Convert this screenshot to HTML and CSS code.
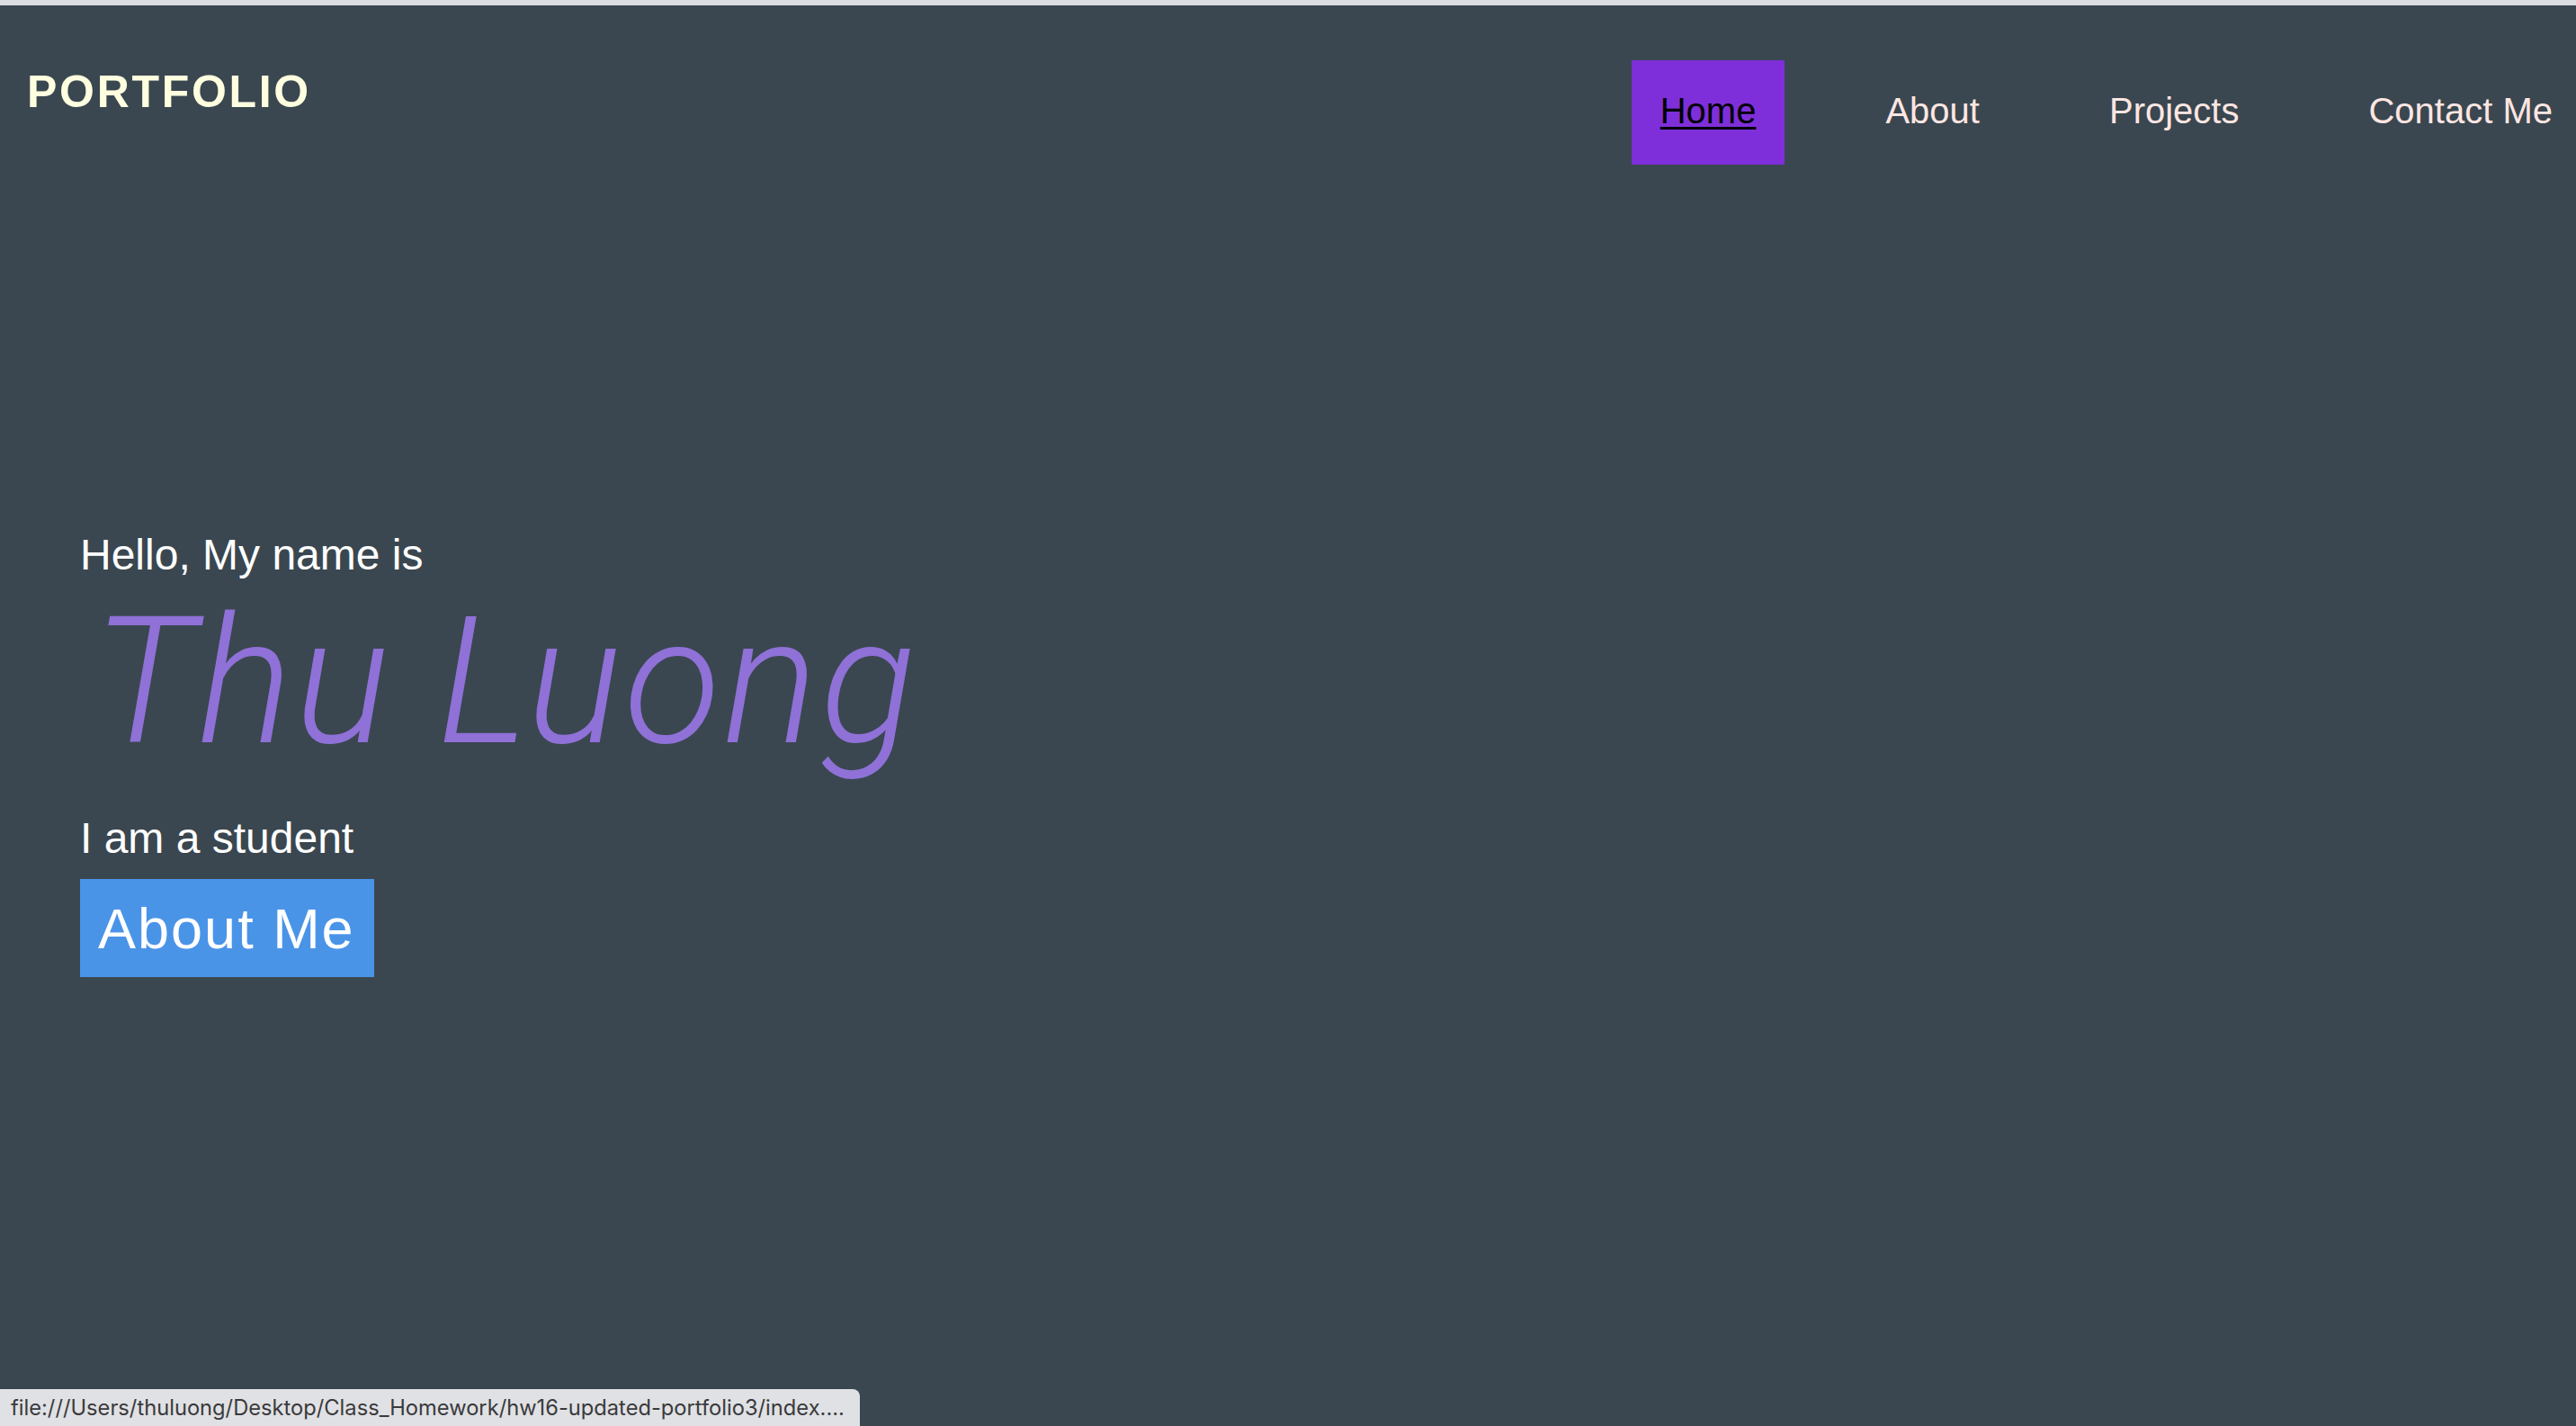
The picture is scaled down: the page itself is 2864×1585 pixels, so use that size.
FILE: index.html
```html
<!DOCTYPE html>
<html lang="en">
<head>
<meta charset="utf-8">
<title>Portfolio</title>
<link rel="stylesheet" href="styles.css">
</head>
<body>
<div class="chrome-edge"></div>
<header class="site-header">
  <div class="logo">PORTFOLIO</div>
  <nav>
    <ul class="nav-list">
      <li><a class="nav-link active" href="#">Home</a></li>
      <li><a class="nav-link" href="#">About</a></li>
      <li><a class="nav-link" href="#">Projects</a></li>
      <li><a class="nav-link" href="#">Contact Me</a></li>
    </ul>
  </nav>
</header>
<main class="hero">
  <p class="hello">Hello, My name is</p>
  <h1 class="name">Thu Luong</h1>
  <p class="tagline">I am a student</p>
  <a class="about-btn" href="#">About Me</a>
</main>
<div class="status-bar">file:///Users/thuluong/Desktop/Class_Homework/hw16-updated-portfolio3/index....</div>
</body>
</html>
```

FILE: styles.css
```css
html, body {
  margin: 0;
  padding: 0;
}
body {
  background: #3a4750;
  min-height: 1585px;
  font-family: "Liberation Sans", Arial, Helvetica, sans-serif;
  overflow: hidden;
}
.chrome-edge {
  height: 6px;
  background: #dcdde1;
}
.site-header {
  display: flex;
  justify-content: space-between;
  align-items: flex-start;
}
.logo {
  margin-top: 67px;
  margin-left: 30px;
  font-size: 50px;
  line-height: 58px;
  font-weight: 700;
  letter-spacing: 2.7px;
  color: #ffffe0;
}
.nav-list {
  list-style: none;
  margin: 61px 0 0 0;
  padding: 0;
  display: flex;
  gap: 80px;
}
.nav-link {
  display: block;
  padding: 33px 32px 37px;
  font-size: 40px;
  line-height: 46px;
  color: #ffe6e2;
  text-decoration: none;
}
.nav-list li:last-child .nav-link {
  padding-right: 26px;
}
.nav-link.active {
  background: #7e2fd9;
  color: #000;
  text-decoration: underline;
  text-decoration-thickness: 3px;
  text-underline-offset: 4px;
}
.hero {
  padding-left: 89px;
}
.hello {
  margin: 406px 0 0;
  font-size: 48px;
  line-height: 56px;
  color: #ffffff;
}
.name {
  margin: 3px 0 0 14px;
  font-family: Roboto, "Liberation Sans", sans-serif;
  font-style: italic;
  font-weight: 300;
  font-size: 197px;
  line-height: 220px;
  letter-spacing: 3px;
  color: #8f71d7;
}
.tagline {
  margin: 36px 0 0;
  font-size: 48px;
  line-height: 56px;
  color: #ffffff;
}
.about-btn {
  display: block;
  width: fit-content;
  margin-top: 17px;
  padding: 19px 21px 17px 20px;
  background: #4a94e8;
  color: #ffffff;
  font-size: 63px;
  line-height: 73px;
  letter-spacing: 2px;
  text-decoration: none;
}
.status-bar {
  position: fixed;
  left: 0;
  bottom: 0;
  width: 944px;
  height: 41px;
  padding-left: 12px;
  background: #e0e1e4;
  border-top-right-radius: 8px;
  color: #3a3a3c;
  font-family: Inter, "Liberation Sans", sans-serif;
  font-size: 23.7px;
  line-height: 41px;
  white-space: nowrap;
  overflow: hidden;
}
```
